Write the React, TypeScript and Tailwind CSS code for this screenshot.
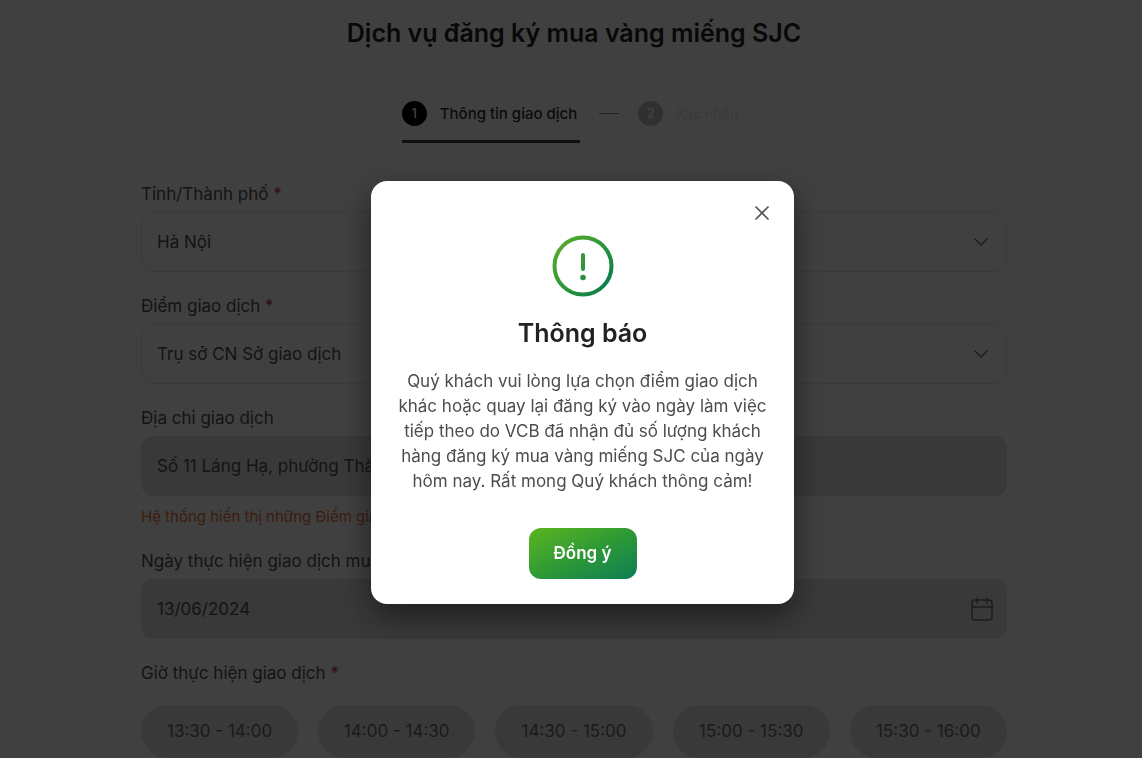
import { useState } from 'react';
import type { ReactNode } from 'react';
import { ChevronDown, X } from 'lucide-react';

const timeSlots = ['13:30 - 14:00', '14:00 - 14:30', '14:30 - 15:00', '15:00 - 15:30', '15:30 - 16:00'];

const fieldBase = 'block w-full h-[60px] px-[15px] rounded-xl border text-[17px] leading-6 text-[#505050] outline-none';

interface FieldProps {
    id: string;
    label: string;
    required?: boolean;
    note?: string;
    children: ReactNode;
}

const Field = ({ id, label, required, note, children }: FieldProps) => (
    <div>
        <label htmlFor={id} className="block mb-1.5 text-[17px] leading-6 text-[#505050]">
            {label}{required && <span className="text-[#d02848]"> *</span>}
        </label>
        {children}
        {note && <p className="mt-[11px] text-[15px] leading-5 text-[#e8743c]">{note}</p>}
    </div>
);

const SelectField = ({ id, label, options }: { id: string; label: string; options: string[] }) => (
    <Field id={id} label={label} required>
        <div className="relative">
            <select id={id} className={`${fieldBase} appearance-none bg-white border-[#e8e8e8]`}>
                {options.map(option => <option key={option}>{option}</option>)}
            </select>
            <ChevronDown className="absolute right-3.5 top-[18px] w-6 h-6 text-[#707070] pointer-events-none" strokeWidth={1.5} />
        </div>
    </Field>
);

const CalendarIcon = () => (
    <svg viewBox="0 0 24 24" className="absolute right-[13px] top-[18px] w-6 h-6 text-[#707070]" fill="none"
        stroke="currentColor" strokeWidth="1.5" strokeLinecap="round" aria-hidden="true">
        <rect x="2" y="3" width="20" height="20" rx="3" />
        <path d="M2 10h20M7 1v5M17 1v5" />
    </svg>
);

const Stepper = () => (
    <ol className="flex justify-center items-start pr-2 text-[15px] leading-[25px] font-medium">
        <li className="flex items-center gap-[13px] pr-[3px] pb-3.5 border-b-[3px] border-[#404040] text-[#303030]">
            <span className="w-[25px] h-[25px] rounded-full bg-black text-center text-[13px] text-white">1</span>
            Thông tin giao dịch
        </li>
        <li className="w-5 h-px mt-3 mx-[19px] bg-[#909090]" aria-hidden="true" />
        <li className="flex items-center gap-[13px] text-sm leading-[25px] text-[#e6e6e6]">
            <span className="w-[25px] h-[25px] rounded-full bg-[#c0c0c0] text-center text-[13px] text-white">2</span>
            Xác nhận
        </li>
    </ol>
);

const NoticeIcon = () => (
    <svg viewBox="0 0 62 62" className="w-[62px] h-[62px]" fill="none" aria-hidden="true">
        <defs>
            <linearGradient id="notice" x1="4" y1="8" x2="56" y2="54" gradientUnits="userSpaceOnUse">
                <stop stopColor="#58ad2b" />
                <stop offset="0.5" stopColor="#2f9638" />
                <stop offset="1" stopColor="#0d7d4b" />
            </linearGradient>
        </defs>
        <circle cx="31" cy="31" r="28.5" stroke="url(#notice)" strokeWidth="4" />
        <rect x="29" y="18" width="4" height="18" rx="2" fill="url(#notice)" />
        <circle cx="31" cy="42.5" r="2.8" fill="url(#notice)" />
    </svg>
);

const NoticeDialog = ({ onClose }: { onClose: () => void }) => (
    <div className="fixed inset-0 flex justify-center items-start pt-[181px] pl-[23px] bg-black/75">
        <div role="dialog" aria-modal="true" aria-labelledby="notice-title"
            className="relative flex flex-col items-center w-[423px] max-w-full pt-[54px] px-6 pb-[25px] rounded-2xl bg-white shadow-[0_12px_32px_rgba(0,0,0,0.5)]">
            <button type="button" onClick={onClose} aria-label="Đóng" className="absolute top-5 right-5 text-[#555555]">
                <X className="w-6 h-6" strokeWidth={1.75} />
            </button>
            <NoticeIcon />
            <h2 id="notice-title" className="mt-5 text-[25px] leading-8 font-semibold text-[#222222]">Thông báo</h2>
            <p className="mt-5 text-center text-[17px] leading-[25px] text-[#4c4c4c]">
                Quý khách vui lòng lựa chọn điểm giao dịch khác hoặc quay lại đăng ký vào ngày làm việc
                tiếp theo do VCB đã nhận đủ số lượng khách hàng đăng ký mua vàng miếng SJC của ngày
                hôm nay. Rất mong Quý khách thông cảm!
            </p>
            <button type="button" onClick={onClose}
                className="mt-[34px] w-[108px] h-[51px] rounded-xl bg-linear-to-br from-[#5bb51c] via-[#2d9a34] to-[#0a7d50] text-[17px] font-semibold text-white">
                Đồng ý
            </button>
        </div>
    </div>
);

export default function App() {
    const [noticeOpen, setNoticeOpen] = useState(true);

    return (
        <div className="bg-white font-['Inter','Noto_Sans',sans-serif]">
            <main className="pt-[17px] pl-[141px] pr-[135px]">
                <h1 className="mb-[52px] text-center text-[25px] leading-8 font-semibold text-[#222222]">
                    Dịch vụ đăng ký mua vàng miếng SJC
                </h1>
                <Stepper />

                <form className="mt-[39px] flex flex-col gap-[22px]">
                    <SelectField id="city" label="Tỉnh/Thành phố" options={['Hà Nội']} />
                    <SelectField id="branch" label="Điểm giao dịch" options={['Trụ sở CN Sở giao dịch']} />

                    <Field id="address" label="Địa chỉ giao dịch" note="Hệ thống hiển thị những Điểm giao dịch còn nhận đăng ký">
                        <input id="address" readOnly value="Số 11 Láng Hạ, phường Thành Công"
                            className={`${fieldBase} bg-[#e2e2e2] border-[#e2e2e2]`} />
                    </Field>

                    <Field id="date" label="Ngày thực hiện giao dịch mua vàng" required>
                        <div className="relative">
                            <input id="date" readOnly value="13/06/2024" className={`${fieldBase} bg-[#e2e2e2] border-[#e2e2e2]`} />
                            <CalendarIcon />
                        </div>
                    </Field>

                    <fieldset>
                        <legend className="mb-5 text-[17px] leading-6 text-[#505050]">
                            Giờ thực hiện giao dịch<span className="text-[#d02848]"> *</span>
                        </legend>
                        <div className="grid grid-cols-5 gap-5">
                            {timeSlots.map(slot => (
                                <button key={slot} type="button" className="h-[53px] rounded-full bg-[#e2e2e2] text-[17px] text-[#6c6c6c]">
                                    {slot}
                                </button>
                            ))}
                        </div>
                    </fieldset>
                </form>
            </main>

            {noticeOpen && <NoticeDialog onClose={() => setNoticeOpen(false)} />}
        </div>
    );
}
